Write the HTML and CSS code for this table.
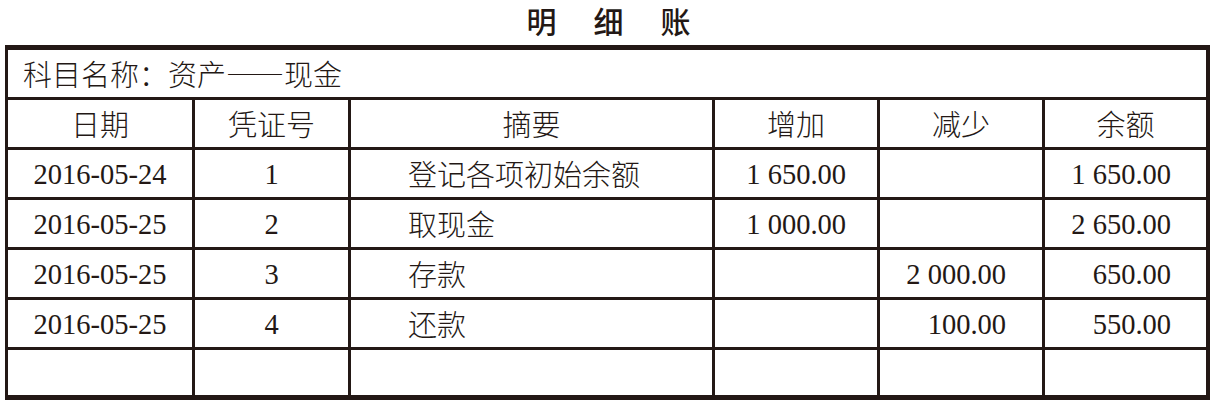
FILE: index.html
```html
<!DOCTYPE html>
<html lang="zh-CN">
<head>
<meta charset="utf-8">
<title>明细账</title>
<link rel="stylesheet" href="styles.css">
</head>
<body>
<div class="page">
  <h1 class="title"><span>明</span><span>细</span><span>账</span></h1>
  <div class="ledger">
    <div class="cell subject">科目名称：资产——现金</div>

    <div class="cell head">日期</div>
    <div class="cell head">凭证号</div>
    <div class="cell head">摘要</div>
    <div class="cell head">增加</div>
    <div class="cell head">减少</div>
    <div class="cell head">余额</div>

    <div class="cell num center">2016-05-24</div>
    <div class="cell num center">1</div>
    <div class="cell desc">登记各项初始余额</div>
    <div class="cell num amt-in">1 650.00</div>
    <div class="cell num amt-out"></div>
    <div class="cell num amt-bal">1 650.00</div>

    <div class="cell num center">2016-05-25</div>
    <div class="cell num center">2</div>
    <div class="cell desc">取现金</div>
    <div class="cell num amt-in">1 000.00</div>
    <div class="cell num amt-out"></div>
    <div class="cell num amt-bal">2 650.00</div>

    <div class="cell num center">2016-05-25</div>
    <div class="cell num center">3</div>
    <div class="cell desc">存款</div>
    <div class="cell num amt-in"></div>
    <div class="cell num amt-out">2 000.00</div>
    <div class="cell num amt-bal">650.00</div>

    <div class="cell num center">2016-05-25</div>
    <div class="cell num center">4</div>
    <div class="cell desc">还款</div>
    <div class="cell num amt-in"></div>
    <div class="cell num amt-out">100.00</div>
    <div class="cell num amt-bal">550.00</div>

    <div class="cell"></div>
    <div class="cell"></div>
    <div class="cell"></div>
    <div class="cell"></div>
    <div class="cell"></div>
    <div class="cell"></div>
  </div>
</div>
</body>
</html>
```

FILE: styles.css
```css
html, body {
  margin: 0;
  padding: 0;
  background: #ffffff;
}

body {
  width: 1217px;
  height: 405px;
  overflow: hidden;
  color: #231815;
  font-family: "Noto Sans CJK SC", "Noto Sans", sans-serif;
}

.page {
  padding: 0 0 0 5px;
}

.title {
  margin: 0;
  height: 45px;
  display: flex;
  justify-content: center;
  align-items: flex-start;
  gap: 37px;
  padding: 3px 0 0 0;
  box-sizing: border-box;
  font-size: 30px;
  line-height: 34px;
  font-weight: 500;
  margin-left: -5px;
}

.ledger {
  display: grid;
  grid-template-columns: 184px 153px 361px 162px 162px 161px;
  grid-template-rows: 47px 47px 47px 47px 47px 47px 45px;
  gap: 3px;
  width: max-content;
  background: #231815;
  border-style: solid;
  border-color: #231815;
  border-width: 5px 4px 5px 3px;
}

.cell {
  background: #ffffff;
  display: flex;
  align-items: center;
  font-size: 29px;
  line-height: 1;
  white-space: nowrap;
  font-weight: 300;
}

.subject {
  grid-column: 1 / -1;
  padding-left: 15px;
}

.head {
  justify-content: center;
}

.desc {
  padding-left: 57px;
}

.num {
  font-family: "Liberation Serif", "Times New Roman", serif;
  font-size: 28.5px;
  font-weight: 400;
  padding-top: 3px;
}

.center {
  justify-content: center;
}

.amt-in {
  justify-content: flex-end;
  padding-right: 31px;
}

.amt-out {
  justify-content: flex-end;
  padding-right: 36px;
}

.amt-bal {
  justify-content: flex-end;
  padding-right: 35px;
}
```
